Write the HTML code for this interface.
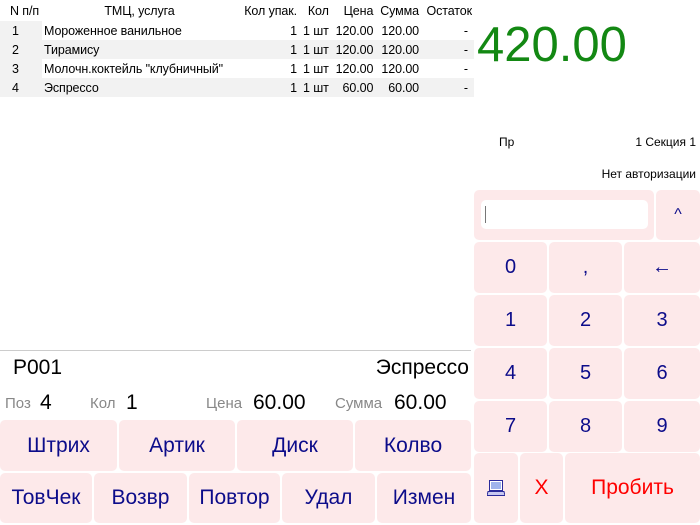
<!DOCTYPE html>
<html><head><meta charset="utf-8"><style>
*{margin:0;padding:0;box-sizing:border-box}
body{width:700px;height:525px;background:#fff;font-family:"Liberation Sans",sans-serif;position:relative;overflow:hidden}
.a{position:absolute}
.b{position:absolute;background:#fde9ea;border-radius:5px;color:#0c0c8a;display:flex;align-items:center;justify-content:center;font-size:21px}
.k{font-size:20px}
table{position:absolute;left:0;top:0;border-collapse:collapse;font-size:12.5px;width:474px;letter-spacing:-0.1px}
td{height:19px;padding:0 2px;white-space:nowrap}
.r{text-align:right}
.g td{background:#f2f2f2}
.lbl{color:#888;font-size:15px}
.val{font-size:21px;color:#000}
</style></head><body>
<table>
<tr style="height:21px"><td style="width:42px;padding-left:10px">N п/п</td><td style="text-align:center;width:195px">ТМЦ, услуга</td><td class="r" style="width:62px">Кол упак.</td><td class="r">Кол</td><td class="r">Цена</td><td class="r">Сумма</td><td class="r">Остаток</td></tr>
<tr><td style="padding-left:12px;background:#f2f2f2">1</td><td>Мороженное ванильное</td><td class="r">1</td><td class="r">1 шт</td><td class="r">120.00</td><td class="r">120.00</td><td class="r" style="padding-right:6px">-</td></tr>
<tr class="g"><td style="padding-left:12px">2</td><td>Тирамису</td><td class="r">1</td><td class="r">1 шт</td><td class="r">120.00</td><td class="r">120.00</td><td class="r" style="padding-right:6px">-</td></tr>
<tr><td style="padding-left:12px;background:#f2f2f2">3</td><td>Молочн.коктейль "клубничный"</td><td class="r">1</td><td class="r">1 шт</td><td class="r">120.00</td><td class="r">120.00</td><td class="r" style="padding-right:6px">-</td></tr>
<tr class="g"><td style="padding-left:12px">4</td><td>Эспрессо</td><td class="r">1</td><td class="r">1 шт</td><td class="r">60.00</td><td class="r">60.00</td><td class="r" style="padding-right:6px">-</td></tr>
</table>
<div class="a" style="left:477px;top:17px;font-size:49px;color:#138813">420.00</div>
<div class="a" style="left:499px;top:135px;font-size:12px">Пр</div>
<div class="a" style="right:4px;top:135px;font-size:12px">1 Секция 1</div>
<div class="a" style="right:4px;top:167px;font-size:12px">Нет авторизации</div>
<div class="b" style="left:474px;top:190px;width:180px;height:50px"><div style="position:absolute;left:7px;top:10px;width:167px;height:29px;background:#fff;border-radius:5px"><div style="position:absolute;left:4px;top:6px;width:1px;height:17px;background:#777"></div></div></div>
<div class="b" style="left:656px;top:190px;width:44px;height:50px;font-size:16px">^</div>
<div class="b k" style="left:474px;top:242px;width:73px;height:51px">0</div>
<div class="b k" style="left:549px;top:242px;width:73px;height:51px">,</div>
<div class="b k" style="left:624px;top:242px;width:76px;height:51px">←</div>
<div class="b k" style="left:474px;top:295px;width:73px;height:51px">1</div>
<div class="b k" style="left:549px;top:295px;width:73px;height:51px">2</div>
<div class="b k" style="left:624px;top:295px;width:76px;height:51px">3</div>
<div class="b k" style="left:474px;top:348px;width:73px;height:51px">4</div>
<div class="b k" style="left:549px;top:348px;width:73px;height:51px">5</div>
<div class="b k" style="left:624px;top:348px;width:76px;height:51px">6</div>
<div class="b k" style="left:474px;top:401px;width:73px;height:51px">7</div>
<div class="b k" style="left:549px;top:401px;width:73px;height:51px">8</div>
<div class="b k" style="left:624px;top:401px;width:76px;height:51px">9</div>
<div class="b" style="left:474px;top:453px;width:44px;height:70px"><svg width="18" height="17" viewBox="0 0 18 17"><rect x="2.5" y="0.5" width="13" height="10" fill="#fff" stroke="#2a2a9a"/><rect x="4" y="2" width="10" height="7" fill="#9fb4ec"/><path d="M1 11.5h16l1 4H0z" fill="#c8c8f0" stroke="#2a2a9a"/></svg></div>
<div class="b" style="left:520px;top:453px;width:43px;height:70px;color:#f00">X</div>
<div class="b" style="left:565px;top:453px;width:135px;height:70px;color:#f00">Пробить</div>
<div class="a" style="left:0;top:350px;width:471px;height:1px;background:#ccc"></div>
<div class="a" style="left:13px;top:356px;font-size:21px">P001</div>
<div class="a" style="right:231px;top:356px;font-size:21px">Эспрессо</div>
<div class="a lbl" style="left:5px;top:395px">Поз</div><div class="a val" style="left:40px;top:391px">4</div>
<div class="a lbl" style="left:90px;top:395px">Кол</div><div class="a val" style="left:126px;top:391px">1</div>
<div class="a lbl" style="left:206px;top:395px">Цена</div><div class="a val" style="left:253px;top:391px">60.00</div>
<div class="a lbl" style="left:335px;top:395px">Сумма</div><div class="a val" style="left:394px;top:391px">60.00</div>
<div class="b" style="left:0;top:420px;width:117px;height:51px">Штрих</div>
<div class="b" style="left:119px;top:420px;width:116px;height:51px">Артик</div>
<div class="b" style="left:237px;top:420px;width:116px;height:51px">Диск</div>
<div class="b" style="left:355px;top:420px;width:116px;height:51px">Колво</div>
<div class="b" style="left:0;top:473px;width:92px;height:50px">ТовЧек</div>
<div class="b" style="left:94px;top:473px;width:93px;height:50px">Возвр</div>
<div class="b" style="left:189px;top:473px;width:91px;height:50px">Повтор</div>
<div class="b" style="left:282px;top:473px;width:93px;height:50px">Удал</div>
<div class="b" style="left:377px;top:473px;width:94px;height:50px">Измен</div>
</body></html>
